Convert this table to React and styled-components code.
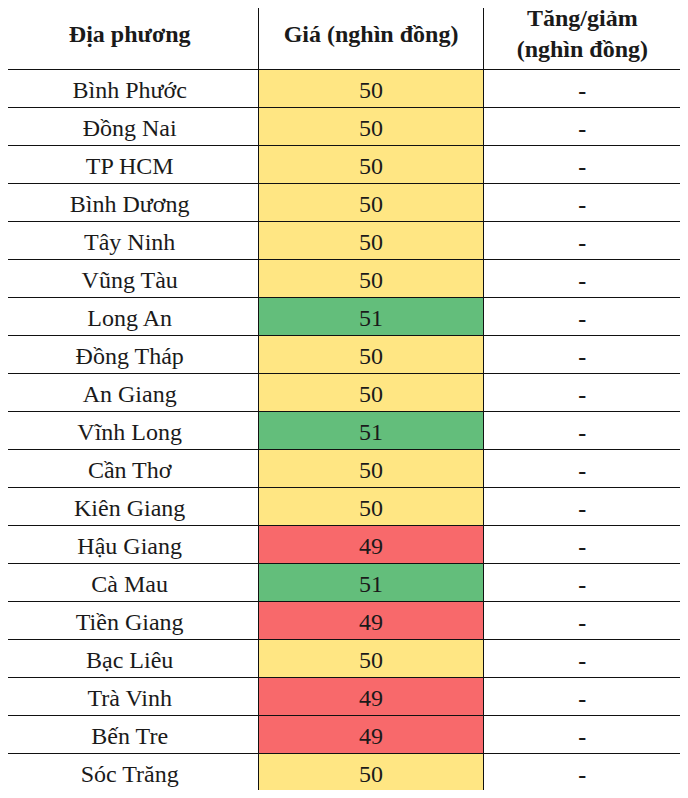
import styled from "styled-components";

const serif = `"Liberation Serif", "Times New Roman", serif`;

const colors = {
  yellow: "#ffe683",
  green: "#63be7b",
  red: "#f8696b",
  line: "#111111",
  edge: "#d4d4d4",
};

const rows = [
  ["Bình Phước", 50],
  ["Đồng Nai", 50],
  ["TP HCM", 50],
  ["Bình Dương", 50],
  ["Tây Ninh", 50],
  ["Vũng Tàu", 50],
  ["Long An", 51],
  ["Đồng Tháp", 50],
  ["An Giang", 50],
  ["Vĩnh Long", 51],
  ["Cần Thơ", 50],
  ["Kiên Giang", 50],
  ["Hậu Giang", 49],
  ["Cà Mau", 51],
  ["Tiền Giang", 49],
  ["Bạc Liêu", 50],
  ["Trà Vinh", 49],
  ["Bến Tre", 49],
  ["Sóc Trăng", 50],
];

const priceColor = (v) =>
  v > 50 ? colors.green : v < 50 ? colors.red : colors.yellow;

// body keeps its default 8px margin, so the page pulls itself back to the corner
const Page = styled.div`
  width: 688px;
  height: 798px;
  margin: -8px;
  background: #fff;
  font-family: ${serif};
`;

const Table = styled.table`
  width: 682px;
  table-layout: fixed;
  border-collapse: collapse;
  border-top: 1px solid ${colors.edge};
  border-left: 1px solid ${colors.edge};
  font-family: ${serif};
  color: #1a1a1a;
`;

const HeadCell = styled.th`
  box-sizing: border-box;
  height: 69px;
  padding: 0 0 2px;
  font-family: ${serif};
  font-size: 24px;
  font-weight: 700;
  line-height: 31px;
  text-align: center;
  vertical-align: middle;
  border-right: 1px solid ${colors.line};
  border-bottom: 1px solid ${colors.line};
`;

const Cell = styled.td`
  box-sizing: border-box;
  height: 38px;
  padding: ${(p) => (p.$dash ? "5px 0 0" : "2px 0 0")};
  font-family: ${serif};
  font-size: 24px;
  font-weight: ${(p) => (p.$dash ? 700 : 400)};
  line-height: 28px;
  text-align: center;
  vertical-align: middle;
  background: ${(p) => p.$bg || "transparent"};
  border-right: 1px solid ${colors.line};
  border-bottom: 1px solid ${colors.line};
`;

export default function App() {
  return (
    <Page>
      <Table>
        <colgroup>
          <col style={{ width: 258 }} />
          <col style={{ width: 224 }} />
          <col style={{ width: 198 }} />
        </colgroup>
        <thead>
          <tr>
            <HeadCell>Địa phương</HeadCell>
            <HeadCell>Giá (nghìn đồng)</HeadCell>
            <HeadCell>
              Tăng/giảm
              <br />
              (nghìn đồng)
            </HeadCell>
          </tr>
        </thead>
        <tbody>
          {rows.map(([name, price]) => (
            <tr key={name}>
              <Cell>{name}</Cell>
              <Cell $bg={priceColor(price)}>{price}</Cell>
              <Cell $dash>-</Cell>
            </tr>
          ))}
        </tbody>
      </Table>
    </Page>
  );
}
